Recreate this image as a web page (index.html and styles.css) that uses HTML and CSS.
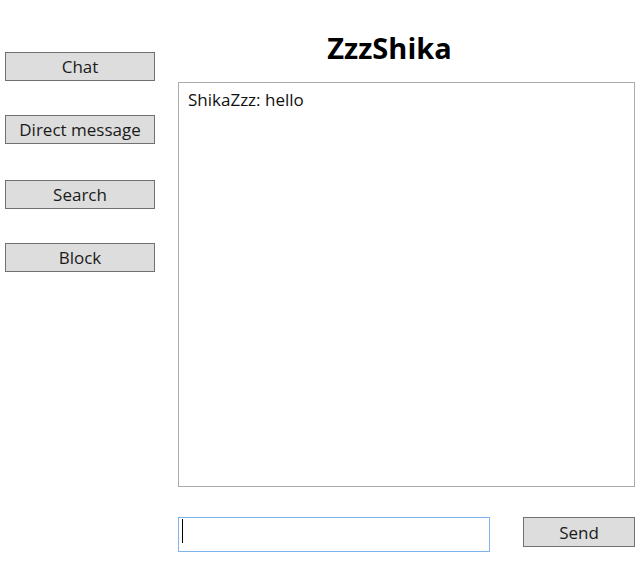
FILE: index.html
```html
<!DOCTYPE html>
<html>
<head>
<meta charset="utf-8">
<link rel="stylesheet" href="styles.css">
</head>
<body>
<div class="window">
  <nav class="sidebar">
    <button class="btn nav-btn">Chat</button>
    <button class="btn nav-btn">Direct message</button>
    <button class="btn nav-btn">Search</button>
    <button class="btn nav-btn">Block</button>
  </nav>
  <main class="main">
    <h1 class="title">ZzzShika</h1>
    <div class="chat-box">ShikaZzz: hello</div>
    <div class="compose">
      <div class="input"><span class="caret"></span></div>
      <button class="btn send-btn">Send</button>
    </div>
  </main>
</div>
</body>
</html>
```
FILE: styles.css
```css
* { box-sizing: border-box; }
html, body {
  margin: 0;
  padding: 0;
  background: #ffffff;
}
body {
  font-family: "Open Sans", "Noto Sans", sans-serif;
  font-size: 17px;
  color: #000;
}
.window {
  display: flex;
  width: 639px;
  height: 580px;
}
.sidebar {
  display: flex;
  flex-direction: column;
  gap: 34px;
  padding: 52px 0 0 5px;
  width: 178px;
}
.btn {
  font-family: inherit;
  font-size: 17px;
  color: #1a1a1a;
  background: #dddddd;
  border: 1px solid #707070;
  border-radius: 0;
  padding: 0;
  margin: 0;
  line-height: 1;
}
.nav-btn {
  width: 150px;
  height: 29px;
}
.nav-btn:nth-child(3) {
  margin-top: 2px;
}
.main {
  display: flex;
  flex-direction: column;
  width: 457px;
}
.title {
  margin: 0;
  height: 82px;
  padding: 28px 34px 0 0;
  text-align: center;
  font-family: "Open Sans", "Noto Sans", sans-serif;
  font-weight: 700;
  font-size: 29px;
  line-height: 40px;
}
.chat-box {
  height: 405px;
  border: 1px solid #ababab;
  padding: 5px 9px;
  line-height: 24px;
  color: #111;
}
.compose {
  display: flex;
  justify-content: space-between;
  align-items: flex-start;
  margin-top: 30px;
}
.input {
  width: 312px;
  height: 35px;
  border: 1px solid #7eb4ea;
  padding: 1px 3px;
}
.caret {
  display: block;
  width: 1px;
  height: 24px;
  background: #000;
}
.send-btn {
  width: 112px;
  height: 30px;
}
```
